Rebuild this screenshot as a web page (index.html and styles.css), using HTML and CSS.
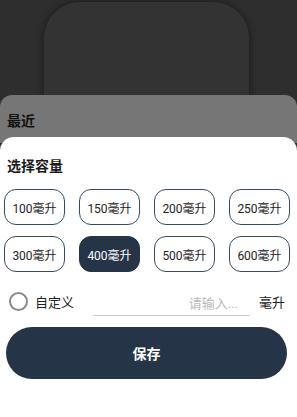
FILE: index.html
```html
<!DOCTYPE html>
<html lang="zh">
<head>
    <meta charset="UTF-8">
    <meta name="viewport" content="width=device-width, initial-scale=1.0">
    <title>选择容量</title>
    <link rel="stylesheet" href="styles.css">
</head>
<body>
    <div class="backdrop">
        <div class="cup-card"></div>
    </div>

    <div class="recent-sheet">
        <h2>最近</h2>
    </div>

    <div class="sheet">
        <h2 class="sheet-title">选择容量</h2>

        <div class="chips">
            <button class="chip">100毫升</button>
            <button class="chip">150毫升</button>
            <button class="chip">200毫升</button>
            <button class="chip">250毫升</button>
            <button class="chip">300毫升</button>
            <button class="chip selected">400毫升</button>
            <button class="chip">500毫升</button>
            <button class="chip">600毫升</button>
        </div>

        <div class="custom-row">
            <span class="radio"></span>
            <span class="custom-label">自定义</span>
            <input class="custom-input" type="text" placeholder="请输入...">
            <span class="unit">毫升</span>
        </div>

        <button class="save-btn">保存</button>
    </div>
</body>
</html>
```

FILE: styles.css
```css
* { box-sizing: border-box; }

body {
    margin: 0;
    width: 297px;
    height: 417px;
    overflow: hidden;
    background: #2e2e2e;
    font-family: Roboto, "Noto Sans CJK SC", sans-serif;
}

.backdrop {
    height: 95px;
    overflow: hidden;
    padding: 2px 0 0 44px;
}
.cup-card {
    width: 205px;
    height: 160px;
    border-radius: 36px;
    background: #333334;
    box-shadow: 0 0 6px 2px rgba(0, 0, 0, 0.3);
}

.recent-sheet {
    height: 48px;
    margin-bottom: -6px;
    background: #767676;
    border-radius: 12px 12px 0 0;
    padding: 15px 7px 0;
}
.recent-sheet h2 {
    margin: 0;
    font-size: 14px;
    font-weight: 700;
    color: #111;
}

.sheet {
    position: relative;
    height: 280px;
    background: #fff;
    border-radius: 14px 14px 0 0;
    padding: 19px 8px 0 4px;
}
.sheet-title {
    margin: 0 0 0 3px;
    font-size: 14px;
    font-weight: 700;
    color: #1a1a1a;
    line-height: 20px;
}

.chips {
    display: grid;
    grid-template-columns: repeat(4, 61px);
    column-gap: 14px;
    row-gap: 11px;
    margin-top: 13px;
}
.chip {
    height: 36px;
    padding: 0;
    border: 1px solid #3a4a5e;
    border-radius: 12px;
    background: #fff;
    font-family: Roboto, "Noto Sans CJK SC", sans-serif;
    font-size: 12px;
    color: #222;
}
.chip.selected {
    background: #253447;
    border-color: #253447;
    color: #fff;
}

.custom-row {
    display: flex;
    align-items: center;
    margin-top: 17px;
    padding-left: 5px;
    height: 24px;
}
.radio {
    width: 19px;
    height: 19px;
    border: 2px solid #8a8a8a;
    border-radius: 50%;
}
.custom-label {
    margin-left: 7px;
    font-size: 13px;
    color: #222;
}
.custom-input {
    width: 157px;
    margin-left: 19px;
    margin-top: 10px;
    padding: 0 12px 4px 0;
    border: none;
    border-bottom: 1.5px solid #c9c9ce;
    outline: none;
    text-align: right;
    font-family: Roboto, "Noto Sans CJK SC", sans-serif;
    font-size: 13px;
    color: #222;
    background: transparent;
}
.custom-input::placeholder { color: #b8b8b8; }
.unit {
    margin-left: 9px;
    font-size: 13px;
    color: #222;
}

.save-btn {
    display: block;
    width: 281px;
    height: 52px;
    margin: 14px 0 0 2px;
    border: none;
    border-radius: 26px;
    background: #253447;
    color: #fff;
    font-family: Roboto, "Noto Sans CJK SC", sans-serif;
    font-size: 14px;
    font-weight: 700;
}
```
